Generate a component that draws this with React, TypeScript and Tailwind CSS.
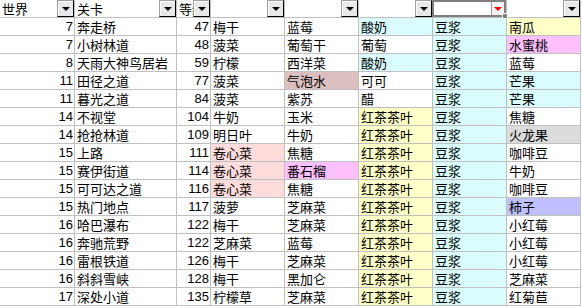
import type { ReactNode } from "react";

type Cell = { t: string; c?: string };

const cy = "bg-[#dafcfc]";
const yl = "bg-[#ffffc8]";
const pk = "bg-[#ffc0ff]";
const lp = "bg-[#ffdcdc]";
const rs = "bg-[#dcc0c0]";
const gy = "bg-[#dcdcdc]";
const lv = "bg-[#c0c0ff]";

type Row = {
  world: number;
  stage: string;
  level: number;
  items: Cell[];
};

const rows: Row[] = [
  { world: 7, stage: "奔走桥", level: 47, items: [{ t: "梅干" }, { t: "蓝莓" }, { t: "酸奶", c: cy }, { t: "豆浆", c: cy }, { t: "南瓜", c: yl }] },
  { world: 7, stage: "小树林道", level: 48, items: [{ t: "菠菜" }, { t: "葡萄干" }, { t: "葡萄" }, { t: "豆浆", c: cy }, { t: "水蜜桃", c: pk }] },
  { world: 8, stage: "天雨大神鸟居岩", level: 59, items: [{ t: "柠檬" }, { t: "西洋菜" }, { t: "酸奶", c: cy }, { t: "豆浆", c: cy }, { t: "蓝莓" }] },
  { world: 11, stage: "田径之道", level: 77, items: [{ t: "菠菜" }, { t: "气泡水", c: rs }, { t: "可可" }, { t: "豆浆", c: cy }, { t: "芒果", c: cy }] },
  { world: 11, stage: "暮光之道", level: 84, items: [{ t: "菠菜" }, { t: "紫苏" }, { t: "醋" }, { t: "豆浆", c: cy }, { t: "芒果", c: cy }] },
  { world: 14, stage: "不视堂", level: 104, items: [{ t: "牛奶" }, { t: "玉米" }, { t: "红茶茶叶", c: yl }, { t: "豆浆", c: cy }, { t: "焦糖" }] },
  { world: 14, stage: "抢抢林道", level: 109, items: [{ t: "明日叶" }, { t: "牛奶" }, { t: "红茶茶叶", c: yl }, { t: "豆浆", c: cy }, { t: "火龙果", c: gy }] },
  { world: 15, stage: "上路", level: 111, items: [{ t: "卷心菜", c: lp }, { t: "焦糖" }, { t: "红茶茶叶", c: yl }, { t: "豆浆", c: cy }, { t: "咖啡豆" }] },
  { world: 15, stage: "赛伊街道", level: 114, items: [{ t: "卷心菜", c: lp }, { t: "番石榴", c: pk }, { t: "红茶茶叶", c: yl }, { t: "豆浆", c: cy }, { t: "牛奶" }] },
  { world: 15, stage: "可可达之道", level: 116, items: [{ t: "卷心菜", c: lp }, { t: "焦糖" }, { t: "红茶茶叶", c: yl }, { t: "豆浆", c: cy }, { t: "咖啡豆" }] },
  { world: 15, stage: "热门地点", level: 117, items: [{ t: "菠萝" }, { t: "芝麻菜" }, { t: "红茶茶叶", c: yl }, { t: "豆浆", c: cy }, { t: "柿子", c: lv }] },
  { world: 16, stage: "哈巴瀑布", level: 122, items: [{ t: "梅干" }, { t: "芝麻菜" }, { t: "红茶茶叶", c: yl }, { t: "豆浆", c: cy }, { t: "小红莓" }] },
  { world: 16, stage: "奔驰荒野", level: 122, items: [{ t: "芝麻菜" }, { t: "蓝莓" }, { t: "红茶茶叶", c: yl }, { t: "豆浆", c: cy }, { t: "小红莓" }] },
  { world: 16, stage: "雷根铁道", level: 126, items: [{ t: "梅干" }, { t: "芝麻菜" }, { t: "红茶茶叶", c: yl }, { t: "豆浆", c: cy }, { t: "小红莓" }] },
  { world: 16, stage: "斜斜雪峡", level: 128, items: [{ t: "梅干" }, { t: "黑加仑" }, { t: "红茶茶叶", c: yl }, { t: "豆浆", c: cy }, { t: "芝麻菜" }] },
  { world: 17, stage: "深处小道", level: 135, items: [{ t: "柠檬草" }, { t: "芝麻菜" }, { t: "红茶茶叶", c: yl }, { t: "豆浆", c: cy }, { t: "红菊苣" }] },
];

const cellBase =
  "h-[18px] border-r border-b border-[#c0c0c0] leading-[17px] overflow-hidden whitespace-nowrap text-[13px] text-black";
const cjk = "font-['Noto_Sans_CJK_SC','Noto_Sans',sans-serif]";
const num = "font-['Liberation_Sans',Arial,sans-serif] text-right pr-[1px]";

function FilterButton({ red = false }: { red?: boolean }) {
  return (
    <span
      className={
        red
          ? "absolute right-[2px] top-[2px] flex h-[13px] w-[13px] items-center justify-center border-l border-[#a0a0a0] bg-[#f4f4f4]"
          : "absolute right-0 top-0 flex h-[17px] w-[17px] items-center justify-center border border-[#a0a0a0] border-r-black border-b-black bg-[#e8e8e8] shadow-[inset_1px_1px_0_#ffffff]"
      }
    >
      <span
        className={
          red
            ? "h-0 w-0 border-x-[4px] border-t-[4px] border-x-transparent border-t-[#ff0000]"
            : "h-0 w-0 border-x-[4px] border-t-[4px] border-x-transparent border-t-black"
        }
      />
    </span>
  );
}

function HeadCell({ children, selected = false }: { children?: ReactNode; selected?: boolean }) {
  return (
    <div className={`${cellBase} ${cjk} relative overflow-visible bg-white pl-[2px]`}>
      {children}
      {selected ? (
        <>
          <span className="absolute -left-[1px] top-0 right-0 bottom-0 border-2 border-[#808080]" />
          <FilterButton red />
          <span className="absolute -right-[2px] -bottom-[2px] z-10 h-[6px] w-[6px] border border-white bg-[#808080]" />
        </>
      ) : (
        <FilterButton />
      )}
    </div>
  );
}

export default function App() {
  return (
    <div className="h-[306px] w-[582px] overflow-hidden bg-white">
      <div className="grid grid-cols-[75px_102px_34px_74px_74px_74px_74px_74px]">
        <HeadCell>世界</HeadCell>
        <HeadCell>关卡</HeadCell>
        <HeadCell>等级</HeadCell>
        <HeadCell />
        <HeadCell />
        <HeadCell />
        <HeadCell selected />
        <HeadCell />

        {rows.map((r, i) => (
          <div key={i} className="contents">
            <div className={`${cellBase} ${num} bg-white`}>{r.world}</div>
            <div className={`${cellBase} ${cjk} bg-white pl-[2px]`}>{r.stage}</div>
            <div className={`${cellBase} ${num} bg-white`}>{r.level}</div>
            {r.items.map((it, j) => (
              <div key={j} className={`${cellBase} ${cjk} pl-[2px] ${it.c ?? "bg-white"}`}>
                {it.t}
              </div>
            ))}
          </div>
        ))}
      </div>
    </div>
  );
}
